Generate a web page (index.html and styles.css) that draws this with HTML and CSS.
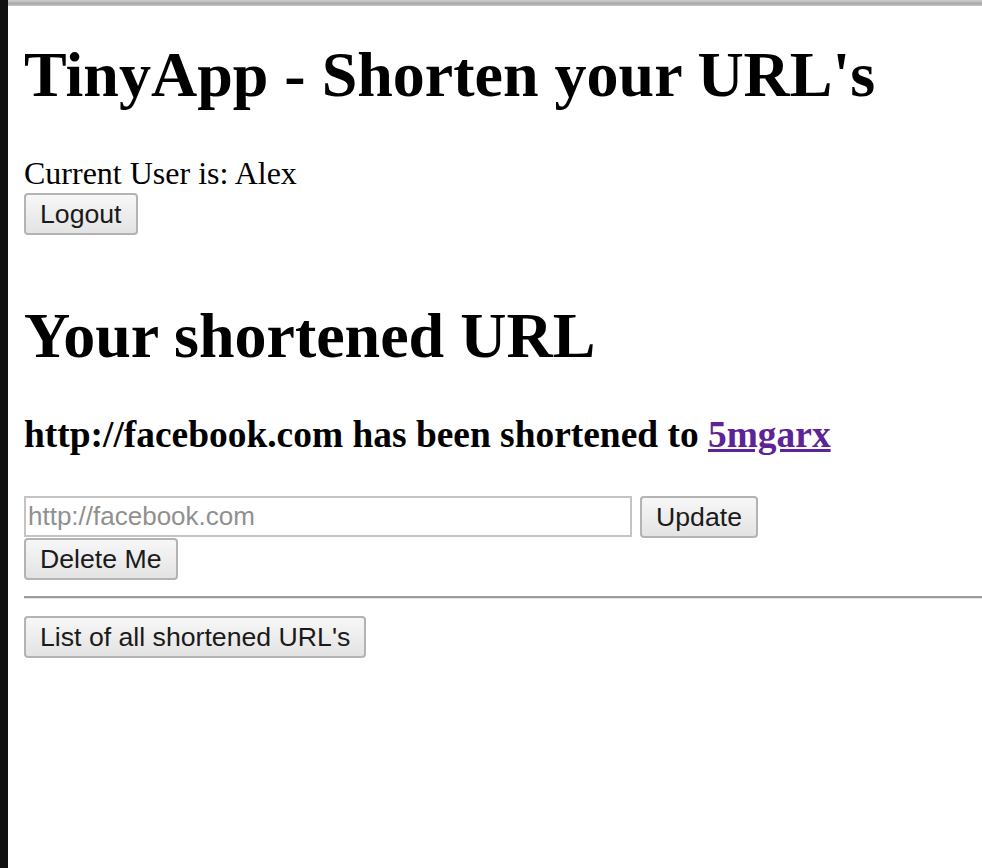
FILE: index.html
```html
<!DOCTYPE html>
<html>
<head>
<meta charset="utf-8">
<title>TinyApp</title>
<link rel="stylesheet" href="styles.css">
</head>
<body>
<div class="frame">
  <div class="topbar"></div>
  <main class="page">
    <h1 class="title">TinyApp - Shorten your URL's</h1>
    <div class="user">Current User is: Alex</div>
    <form class="form">
      <button type="button" class="btn">Logout</button>
    </form>
    <h1 class="title second">Your shortened URL</h1>
    <h3 class="result">http://facebook.com has been shortened to <a class="short" href="#">5mgarx</a></h3>
    <form class="form update-row">
      <input class="url-input" type="text" placeholder="http://facebook.com">
      <button type="button" class="btn">Update</button>
    </form>
    <form class="form">
      <button type="button" class="btn">Delete Me</button>
    </form>
    <hr class="rule">
    <form class="form">
      <button type="button" class="btn">List of all shortened URL's</button>
    </form>
  </main>
</div>
</body>
</html>
```
FILE: styles.css
```css
html, body {
  margin: 0;
  padding: 0;
  background: #ffffff;
}
.frame {
  min-height: 868px;
  border-left: 8px solid #101010;
  box-sizing: border-box;
  overflow: hidden;
}
.topbar {
  height: 6px;
  background: linear-gradient(#cfcfcf, #a9a9a9 60%, #c8c8c8);
}
.page {
  padding: 0 0 0 16px;
  font-family: "Liberation Serif", "Times New Roman", serif;
  font-size: 32px;
  color: #000;
  width: 1200px;
}
.title {
  font-size: 64px;
  font-weight: bold;
  margin: 32px 0 43px;
}
.title.second {
  margin-top: 64px;
  margin-bottom: 40px;
}
.user {
  line-height: normal;
}
.form {
  margin: 0;
}
.btn {
  font-family: "Liberation Sans", Arial, sans-serif;
  font-size: 26.67px;
  color: #1a1a1a;
  padding: 2px 14px;
  border: 2px solid #b3b3b3;
  border-radius: 4px;
  background: linear-gradient(#f7f7f7, #e3e3e3);
  height: 42px;
  line-height: 34px;
  vertical-align: middle;
}
.result {
  font-size: 37.44px;
  font-weight: bold;
  margin: 0 0 40px;
}
.short {
  color: #5e2394;
  text-decoration: underline;
}
.update-row {
  display: flex;
  align-items: center;
  gap: 8px;
}
.url-input {
  width: 608px;
  height: 41px;
  box-sizing: border-box;
  border: 2px solid #c4c4c4;
  padding: 2px 2px;
  font-family: "Liberation Sans", Arial, sans-serif;
  font-size: 26px;
  margin: 0;
}
.url-input::placeholder {
  color: #909090;
}
.rule {
  margin: 16px 0 16px;
  border: 0;
  border-top: 2px solid #9c9c9c;
  border-bottom: 1px solid #e3e3e3;
  height: 0;
}
```
